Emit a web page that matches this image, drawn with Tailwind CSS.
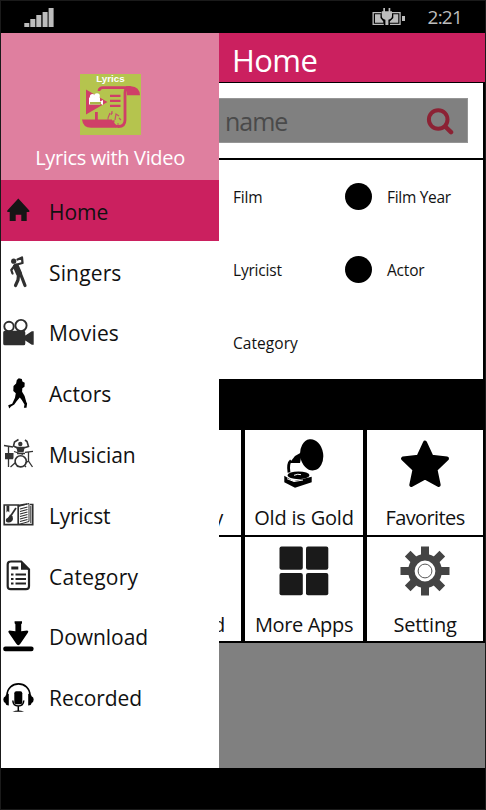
<!DOCTYPE html>
<html lang="en">
<head>
    <meta charset="UTF-8">
    <meta name="viewport" content="width=device-width, initial-scale=1.0">
    <title>Lyrics with Video</title>
    <script src="https://cdn.jsdelivr.net/npm/@tailwindcss/browser@4"></script>
</head>
<body class="bg-black">
<div class="w-[486px] h-[810px] border border-[#1a1a1a] bg-black flex flex-col overflow-hidden font-['Open_Sans','Noto_Sans',sans-serif] text-[#111]">

    <!-- Status bar -->
    <div class="h-8 shrink-0 flex items-center justify-between pl-[23px] pr-[23px] text-[#bdbdbd]">
        <svg class="w-[30px] h-5 -mt-px" viewBox="0 0 30 20" fill="currentColor">
            <path d="M0.3 16h5v4h-5zM6.3 12h5v8h-5zM12.3 8h5v12h-5zM18.6 5h5v15h-5zM24.6 1h5v19h-5z"/>
        </svg>
        <div class="flex items-center gap-[22px]">
            <svg class="w-[34px] h-[18px] -mt-px" viewBox="0 0 34 18" fill="currentColor">
                <path d="M0.5 4h9v1.3H1.8v10.4h10V17H.5zM20 4h8.7v13H18v-1.3h9.4V5.3H20z"/>
                <path d="M3 6.3h5.5V10l2.8 3.5v1.3H3zM21.3 6.3h5v8.5h-8.5v-1.3l3.5-3.5zM30 8h3v5h-3z"/>
                <path d="M11.3 0h1.7v3.2h3.6V0h1.7v3.2H20V8c0 2-1.6 3.4-3.6 3.8V17h-3v-5.2c-2-.4-3.6-1.8-3.6-3.8V3.2h1.5z"/>
            </svg>
            <span class="text-[19px] leading-5 tracking-[-0.8px]">2:21</span>
        </div>
    </div>

    <div class="h-[735px] shrink-0 flex">

        <!-- Side menu -->
        <aside class="w-[218px] shrink-0 bg-white flex flex-col">
            <div class="h-[147px] shrink-0 bg-[#df7f9f] flex flex-col items-center pt-[41px]">
                <svg class="w-[61px] h-[61px]" viewBox="0 0 61 61">
                    <rect width="61" height="61" fill="#b5c44e"/>
                    <text x="30.5" y="7.6" text-anchor="middle" font-family="Liberation Sans" font-weight="700" font-size="9.8" fill="#fff">Lyrics</text>
                    <g fill="none" stroke="#cf3f68" stroke-width="2.8">
                        <path d="M19 17c0-2 1.5-3.3 4-3.3h28"/>
                        <path d="M50 13.500q-5 .5-5 5V46q0 6.500-6.500 6.500-5.500 0-6-6"/>
                    </g>
                    <g fill="#cf3f68">
                        <path d="M46 12.300h5q8.500.5 9 9H47z"/>
                        <path d="M6 15.500l21.500 12.500L6 40.500z"/>
                        <path d="M2 45.500h13V38h2.800v7.500H32q.5 5 5 8.300H11q-8 0-9-8.300z"/>
                    </g>
                    <path d="M30 21.800h10.500M30 26.800h10.500M30 31.800h10.500" stroke="#cf3f68" stroke-width="2.2"/>
                    <g fill="#fff"><circle cx="12.500" cy="22.500" r="2.600"/><circle cx="17" cy="22" r="2.800"/><path d="M9 23.500h11v4l3-1.500v5l-3-1.500v1H9z"/></g>
                    <path d="M10 28h11v2.500H10z" fill="#a9b84a"/>
                    <path d="M28 44l2-5M31 41l1-3M35 46l1-6 3 2M27 45h2M33 47h2M37 50h2M39 44l2 2M32 37v3" stroke="#c4556a" stroke-width="1.2" fill="none"/>
                </svg>
                <div class="mt-2 text-[20px] leading-[30px] tracking-[-0.35px] text-white">Lyrics with Video</div>
            </div>

            <nav class="h-[547px] shrink-0 grid grid-rows-9 text-[21px] tracking-[-0.05px]">
                <a class="flex items-center gap-[14px] bg-[#cb205f]">
                    <svg class="size-[34px]" viewBox="0 0 34 34" fill="#151515"><path d="M17.300 5.600L28.300 17.500v1.400h-2.600V28h-5.400v-6.300h-5.600V28h-6v-9.100H6.300v-1.400z"/></svg>
                    <span class="pt-1">Home</span>
                </a>
                <a class="flex items-center gap-[14px]">
                    <svg class="size-[34px]" viewBox="0 0 34 34" fill="none" stroke="#303030" stroke-linecap="round" stroke-linejoin="round">
                        <circle cx="12.700" cy="7.200" r="2.600" fill="#303030" stroke="none"/>
                        <path d="M15 12.500l3 7" stroke-width="6"/>
                        <path d="M16 10.500l5.500-1.500-.5-5.500-4.500 2" stroke-width="2.300"/>
                        <path d="M13 12.500l-2.700 3.500 1.200 3.500" stroke-width="2.300"/>
                        <path d="M17.500 21l-.5 5-2.500 5.500M19.500 20l2 5 2.500 6.500" stroke-width="3.200"/>
                    </svg>
                    <span class="pt-[5px] tracking-[0.15px]">Singers</span>
                </a>
                <a class="flex items-center gap-[14px]">
                    <svg class="size-[34px]" viewBox="0 0 34 34" fill="#2e2e2e">
                        <g fill="none" stroke="#2e2e2e" stroke-width="1.900"><circle cx="8" cy="11.500" r="4.700"/><circle cx="20" cy="10.500" r="5.600"/></g>
                        <path d="M2.200 17.500q0-1.700 1.700-1.700h18.700q1.700 0 1.700 1.700v3l6.500-4.300h1.900v13.500h-1.900l-6.500-4.300v3q0 1.900-1.700 1.900H3.900q-1.700 0-1.700-1.900z"/>
                    </svg>
                    <span class="pt-1 tracking-[0.15px]">Movies</span>
                </a>
                <a class="flex items-center gap-[14px]">
                    <svg class="size-[34px]" viewBox="0 0 34 34" fill="#000">
                        <path d="M15.800 4l2-1.800 3 .8.6 2.500 2.300 1.300-.2 4-2.200 1.500-.2 3.500 2.500 4.200 1.700 6 .8 1.500-.6 4.300h-2.600l.6-3.300-2.700-4.500-2-2.500-3.200 3.700-2.300 3.200-3.300 2-1.800 2-1-3.200 4-1.400 2.800-6 .8-4.500-2.500-2.300.2-5 2.600-2.500z"/>
                    </svg>
                    <span class="pt-[5px] tracking-[0.05px]">Actors</span>
                </a>
                <a class="flex items-center gap-[14px]">
                    <svg class="size-[34px]" viewBox="0 0 34 34" fill="none" stroke="#333" stroke-width="1.300">
                        <circle cx="19.300" cy="8" r="2.200" fill="#333" stroke="none"/>
                        <path d="M16 11.500h7l-1 4h-5z" fill="#333"/>
                        <path d="M16.500 12l-4-2 1-4 4-2.500M22.500 12l5-1.500-1.500-5-2-1.500" stroke-width="1.600"/>
                        <path d="M3 9.500l9 1.500M24 16.300l8-1M7.500 10v21M13 15.500l9 3M16 17.500h8"/>
                        <path d="M4 17h8.500v5.500H4z" fill="#333" stroke="none"/>
                        <circle cx="19.700" cy="25.300" r="5.600" stroke-width="1.600"/>
                        <path d="M27.500 16v9l4 6M27.500 25l-3 2M9.500 31l5-4.500M16 31l1-1.500M25 31l-2-2M4 22.500h8"/>
                    </svg>
                    <span class="pt-1">Musician</span>
                </a>
                <a class="flex items-center gap-[14px]">
                    <svg class="size-[34px]" viewBox="0 0 34 34" fill="none" stroke="#2e2e2e">
                        <path d="M3.200 8h14v19.700h-14zM17.200 27.700V8.500l9-1.500M29 7.500h2.700v20.200H17" stroke-width="1.700"/>
                        <path d="M17.500 9.500l10.500-3v18l-10.500 3zM29.800 9v17" stroke-width="1"/>
                        <path d="M19 12l7.500-2M19 14.500l7.500-2M19 17l7.500-2M19 19.500l7.500-2M19 22l7.500-2M19 24.500l7.500-2" stroke-width="1.100"/>
                        <path d="M5.500 8.500h2.800v7l-1.400-1.500-1.400 1.500z" fill="#2e2e2e" stroke="none"/>
                        <path d="M15 11l-5 7.500" stroke-width="1.700"/>
                        <path d="M9 17.500l2.500 1.500.5 3c-.5 2.500-2.500 4-5 3.500s-2.500-2.500-1.500-4c1.500-.5 2.500-2 3.500-4z" fill="#2e2e2e" stroke="none"/>
                    </svg>
                    <span class="pt-1 tracking-[-0.25px]">Lyricst</span>
                </a>
                <a class="flex items-center gap-[14px]">
                    <svg class="size-[34px]" viewBox="0 0 34 34" fill="none" stroke="#222">
                        <path d="M9.500 3.500h10.700l7.800 8v16.700q0 3-3 3H9.700q-3 0-3-3v-21.700q0-3 3-3z" stroke-width="2.200"/>
                        <path d="M20 3l8.500 8.800H20z" fill="#222" stroke="none"/>
                        <path d="M10.300 10h7" stroke-width="3"/>
                        <path d="M10 16.500h2.500M14.500 16.500H25M10 21h2.500M14.500 21H25M10 25.500h2.500M14.500 25.500H25" stroke-width="2.200"/>
                    </svg>
                    <span class="pt-[5px] tracking-[0.25px]">Category</span>
                </a>
                <a class="flex items-center gap-[14px]">
                    <svg class="size-[34px]" viewBox="0 0 34 34" fill="#000">
                        <path d="M13.600 2.200h7.400v2l-.8 1v7l6-.8q1.800.5.800 2.200l-7.500 11q-2.200 3.200-4.400 0l-7.500-11q-.9-1.800.8-2.200l6 .8v-7l-.8-1z"/>
                        <rect x="2.200" y="27.400" width="30.400" height="4.900" rx="2.200"/>
                    </svg>
                    <span class="pt-1">Download</span>
                </a>
                <a class="flex items-center gap-[14px]">
                    <svg class="size-[34px]" viewBox="0 0 34 34" fill="#000">
                        <path d="M6 15.500C6 0 29 0 29 15.500" fill="none" stroke="#000" stroke-width="1.600"/>
                        <path d="M7.800 13.800v11.600q-3 0-3.400-2.500-2.100-.8-2.100-3.300t2.100-3.300q.4-2.500 3.400-2.500zM27.200 13.800v11.600q3 0 3.400-2.500 2.100-.8 2.100-3.300t-2.100-3.300q-.4-2.500-3.400-2.500z"/>
                        <rect x="13.300" y="11.300" width="8" height="13" rx="2"/>
                        <path d="M11.800 20.500q.3 5.500 5.500 5.500t5.500-5.500M17.300 26v5" fill="none" stroke="#000" stroke-width="1.500"/>
                        <path d="M11.500 31.800q5.800-2.500 11.600 0z"/>
                    </svg>
                    <span class="pt-1">Recorded</span>
                </a>
            </nav>
        </aside>

        <!-- Page -->
        <main class="flex-1 min-w-0 flex flex-col bg-[#808080]">
            <h1 class="h-[49px] shrink-0 bg-[#cb205f] text-white text-[31px] leading-[54px] tracking-[-0.6px] pl-[13px]">Home</h1>

            <div class="shrink-0 bg-black pr-0.5 pt-px">
                <!-- Search -->
                <div class="bg-white h-[75px] pt-[15px] pr-[15px]">
                    <div class="h-[45px] bg-[#808080] border border-l-0 border-[#959595] flex items-center justify-between pl-[6px] pr-[13px]">
                        <span class="text-[25px] leading-8 tracking-[-1px] pt-px text-[#4a4a4a]">name</span>
                        <svg class="size-7" viewBox="0 0 28 28" fill="none" stroke="#8c2234">
                            <circle cx="12.200" cy="12.500" r="9.300" stroke-width="4"/>
                            <path d="M19.200 19.500l5.800 5.700" stroke-width="4.500" stroke-linecap="round"/>
                        </svg>
                    </div>
                </div>

                <!-- Search by -->
                <div class="mt-0.5 bg-white h-[219px] grid grid-cols-[126px_1fr] grid-rows-3 items-center pl-[14px] text-[15.5px] tracking-[-0.2px]">
                    <span class="pt-0.5">Film</span>
                    <div class="flex items-center gap-[15px] -ml-[14px]"><i class="size-[27px] rounded-full bg-black"></i><span class="pt-0.5 tracking-[-0.3px]">Film Year</span></div>
                    <span class="pt-0.5">Lyricist</span>
                    <div class="flex items-center gap-[15px] -ml-[14px]"><i class="size-[27px] rounded-full bg-black"></i><span class="pt-0.5">Actor</span></div>
                    <span class="pt-0.5 tracking-[0.05px]">Category</span>
                </div>

                <!-- Tiles -->
                <div class="pt-[51px] pb-0.5 grid grid-cols-[22px_118px_116px] grid-rows-[105px_104px] gap-x-1 gap-y-0.5 text-[20px] leading-7 tracking-[-0.2px]">
                    <div class="bg-white flex items-end justify-end pb-[3px] pr-[18px] overflow-hidden">y</div>
                    <div class="bg-white flex flex-col items-center justify-between pt-[9px] pb-[3px]">
                        <svg class="size-[50px]" viewBox="0 0 50 50">
                            <ellipse cx="32.700" cy="15.800" rx="11.500" ry="15.700" transform="rotate(-8 32.700 15.800)"/>
                            <path d="M23 13l-7 4-5.500 7H21z"/>
                            <path d="M12 21.500q-3.500 3-2 12" fill="none" stroke="#000" stroke-width="2.800"/>
                            <ellipse cx="19.500" cy="36.300" rx="11" ry="3.900"/>
                            <path d="M5.300 36.700l9 5.500 18.400-4.500v5.600L16 48.700l-10.700-5.400z"/>
                            <path d="M15 36.300q4-1.800 7-.6M8 39.700l7 2.800 9-1.500" fill="none" stroke="#fff" stroke-width="1"/>
                        </svg>
                        <span>Old is Gold</span>
                    </div>
                    <div class="bg-white flex flex-col items-center justify-between pt-[9px] pb-[3px]">
                        <svg class="size-[50px]" viewBox="0 0 50 50">
                            <path d="M25 3.500l6.600 14.300 15.400 1.800-11.500 11L38.700 46 25 38.500 11.300 46l3.200-15.400L3 19.600l15.400-1.800z" stroke="#000" stroke-width="4" stroke-linejoin="round"/>
                        </svg>
                        <span class="tracking-[-0.6px]">Favorites</span>
                    </div>
                    <div class="bg-white flex items-end justify-end pb-[2px] pr-[16px] overflow-hidden">d</div>
                    <div class="bg-white flex flex-col items-center justify-between pt-[9px] pb-[2px]">
                        <svg class="size-[50px]" viewBox="0 0 50 50" fill="#1a1a1a">
                            <rect x=".5" y=".5" width="23.300" height="23.300" rx="2"/><rect x="27" y=".5" width="22.300" height="23.300" rx="2"/>
                            <rect x=".5" y="27" width="23.300" height="22.300" rx="2"/><rect x="27" y="27" width="22.300" height="22.300" rx="2"/>
                        </svg>
                        <span class="tracking-[-0.35px]">More Apps</span>
                    </div>
                    <div class="bg-white flex flex-col items-center justify-between pt-[9px] pb-[2px]">
                        <svg class="size-[50px]" viewBox="-25 -25 50 50" fill="none" stroke="#444">
                            <circle r="13.700" stroke-width="6.600"/>
                            <path d="M0-24.500v9M0 24.500v-9M-24.500 0h9M24.500 0h-9M-17.300-17.300l6 6M17.300 17.300l-6-6M-17.300 17.300l6-6M17.300-17.300l-6 6" stroke-width="8"/>
                            <circle r="6.900" stroke-width=".9"/>
                        </svg>
                        <span>Setting</span>
                    </div>
                </div>
            </div>
        </main>
    </div>
</div>
</body>
</html>
